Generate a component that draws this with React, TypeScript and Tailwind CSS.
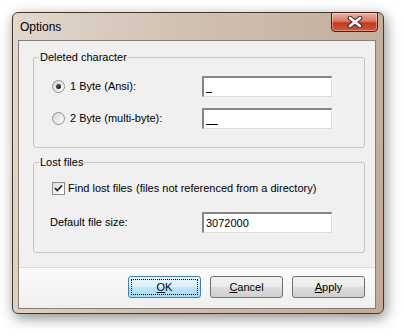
import React from "react";

const font = { fontFamily: '"Liberation Sans", Arial, sans-serif' };

function Radio({ checked }: { checked?: boolean }) {
  return (
    <div className="w-[13px] h-[13px] rounded-full border border-[#8e8f8f] bg-[linear-gradient(135deg,#d5d5d5,#ffffff)] flex items-center justify-center shrink-0">
      {checked && <div className="w-[5px] h-[5px] rounded-full bg-[radial-gradient(circle_at_35%_35%,#5a5a5a,#000000)]" />}
    </div>
  );
}

function Checkbox() {
  return (
    <div className="w-[13px] h-[13px] border border-[#8e8f8f] bg-[linear-gradient(135deg,#dcdcdc,#ffffff)] flex items-center justify-center shrink-0">
      <svg width="9" height="9" viewBox="0 0 9 9">
        <path d="M1 4.2 L3.3 6.6 L8 1.5" stroke="#1a1a1a" strokeWidth="1.7" fill="none" />
      </svg>
    </div>
  );
}

function Input({ value, under }: { value?: string; under?: string }) {
  return (
    <div className="w-[130px] h-[21px] bg-white border-t-2 border-l-2 border-[#858585] border-r border-b border-r-[#dcdcdc] border-b-[#dcdcdc] flex items-center pl-[2px] text-[11px] text-black">
      {value}
      {under && <span className="self-end mb-[3px] h-[1px] bg-black" style={{ width: under === "1" ? 6 : 12 }} />}
    </div>
  );
}

function Btn({ children, def }: { children: React.ReactNode; def?: boolean }) {
  return (
    <div
      className={`w-[73px] h-[22px] rounded-[3px] border ${def ? "border-[#3c7fb1] bg-[linear-gradient(#eaf6fd_0%,#d9f0fc_50%,#bee6fd_51%,#a7d9f5_100%)]" : "border-[#707070] bg-[linear-gradient(#f2f2f2_0%,#ebebeb_50%,#dddddd_51%,#cfcfcf_100%)]"} p-[2px] flex`}
    >
      <div className={`flex-1 flex items-center justify-center text-[11px] text-black ${def ? "border border-dotted border-black" : ""}`}>
        {children}
      </div>
    </div>
  );
}

function Group({ title, children, className }: { title: string; children: React.ReactNode; className?: string }) {
  return (
    <div className={`relative border border-[#c5c5c5] rounded-[3px] ${className ?? ""}`}>
      <span className="absolute left-[5px] -top-[7px] px-[1px] bg-[#f0f0f0] text-[11px] leading-[13px] text-black">{title}</span>
      {children}
    </div>
  );
}

export default function App() {
  return (
    <div className="w-[404px] h-[336px] bg-white pl-[12px] pt-[12px] overflow-hidden" style={font}>
      <div className="w-[372px] h-[302px] rounded-[6px] border border-[#3f3a36] bg-[linear-gradient(100deg,#e2d8cd_0%,#d3c4b6_35%,#c8b5a4_70%,#c1ab98_100%)] shadow-[2px_4px_14px_rgba(0,0,0,0.45)] flex flex-col">
        <div className="h-[27px] flex items-start">
          <span className="h-[27px] flex items-center pl-[7px] text-[12px] text-black">Options</span>
          <div className="ml-auto mr-[5px] -mt-[1px] w-[47px] h-[20px] rounded-b-[4px] border border-[#4d1f14] bg-[linear-gradient(#eab2a4_0%,#d77a66_45%,#c3391d_55%,#d05a3c_100%)] shadow-[inset_0_0_0_1px_rgba(255,255,255,0.35)] flex items-center justify-center">
            <svg width="16" height="12" viewBox="0 0 16 12">
              <path d="M3 2 L13 10 M13 2 L3 10" stroke="#3a2a26" strokeWidth="4.6" strokeLinecap="round" />
              <path d="M3 2 L13 10 M13 2 L3 10" stroke="#ffffff" strokeWidth="2.6" strokeLinecap="round" />
            </svg>
          </div>
        </div>
        <div className="ml-[5px] mr-[7px] h-[269px] border border-[#8a7d72] bg-[#f0f0f0] flex flex-col">
          <div className="pl-[14px] pr-[10px] pt-[16px] flex flex-col gap-[14px]">
            <Group title="Deleted character" className="h-[91px]">
              <div className="pt-[18px] pl-[18px] flex flex-col gap-[11px]">
                <div className="h-[21px] flex items-center">
                  <Radio checked />
                  <span className="ml-[5px] w-[132px] text-[11px] text-black">1 Byte (Ansi):</span>
                  <Input under="1" />
                </div>
                <div className="h-[21px] flex items-center">
                  <Radio />
                  <span className="ml-[5px] w-[132px] text-[11px] text-black">2 Byte (multi-byte):</span>
                  <Input under="2" />
                </div>
              </div>
            </Group>
            <Group title="Lost files" className="h-[91px]">
              <div className="pt-[15px] pl-[18px] flex flex-col gap-[13px]">
                <div className="h-[21px] flex items-center text-[11px] text-black">
                  <Checkbox />
                  <span className="ml-[3px] w-[68px]">Find lost files</span>
                  <span>(files not referenced from a directory)</span>
                </div>
                <div className="h-[21px] flex items-center text-[11px] text-black -ml-[2px]">
                  <span className="w-[152px]">Default file size:</span>
                  <Input value="3072000" />
                </div>
              </div>
            </Group>
          </div>
          <div className="mt-auto h-[41px] border-t border-[#dcdcd0] bg-[linear-gradient(#fbfbfb,#efefef)] flex items-start justify-end gap-[9px] pt-[8px] pr-[10px]">
            <Btn def><span><u>O</u>K</span></Btn>
            <Btn><span><u>C</u>ancel</span></Btn>
            <Btn><span><u>A</u>pply</span></Btn>
          </div>
        </div>
      </div>
    </div>
  );
}
